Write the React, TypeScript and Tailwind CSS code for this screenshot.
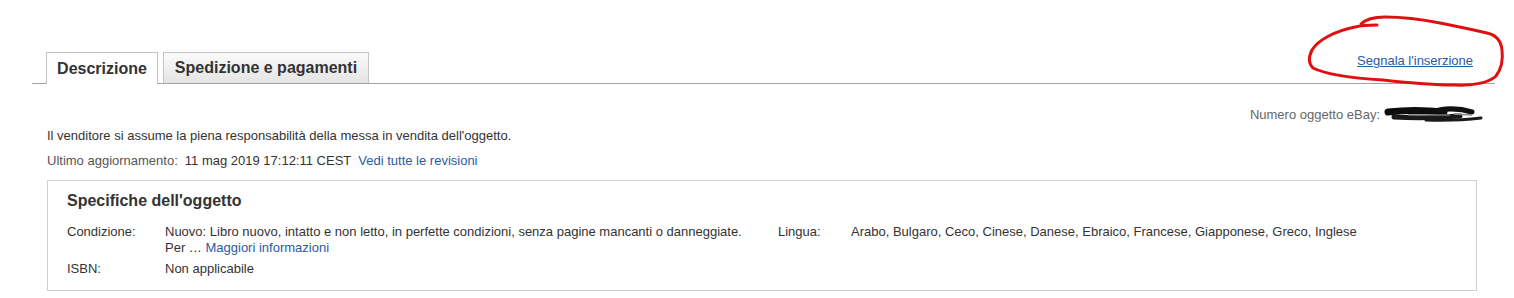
export default function App() {
  return (
    <div className="relative w-[1514px] h-[298px] bg-white font-['Liberation_Sans',Arial,sans-serif] text-[13px] text-[#333] overflow-hidden">
      <div className="ml-[32px] w-[1463px] pt-[52px]">
        {/* Tabs */}
        <div className="flex items-start border-b border-[#a3a3a3] h-[32px]">
          <div className="ml-[14px] h-[32px] w-[112px] border border-b-0 border-[#c4c4c4] bg-white flex items-center justify-center text-[16px] font-bold text-[#333] relative z-10">
            Descrizione
          </div>
          <div className="ml-[5px] h-[31px] w-[206px] border border-b-0 border-[#c4c4c4] bg-gradient-to-b from-[#fbfbfb] to-[#e4e4e4] flex items-center justify-center text-[16px] font-bold text-[#333]">
            Spedizione e pagamenti
          </div>
          <a href="#" className="ml-auto mr-[22px] mt-[1px] text-[13px] leading-[16px] text-[#2a5aa6] underline">
            Segnala l'inserzione
          </a>
        </div>

        {/* Item number */}
        <div className="flex justify-end items-center mt-[23px] pr-[11px] h-[16px] leading-[16px]">
          <span className="text-[#666]">Numero oggetto eBay:</span>
          <svg width="100" height="22" viewBox="0 0 100 22" className="ml-[4px] mt-[2px]">
            <path d="M4,7 Q30,4 60,7" stroke="#0d0d0d" strokeWidth="7" fill="none" strokeLinecap="round" />
            <path d="M10,12 Q40,14 76,11" stroke="#1a1a1a" strokeWidth="5" fill="none" strokeLinecap="round" />
            <path d="M55,5 Q72,2 88,7" stroke="#111" strokeWidth="5" fill="none" strokeLinecap="round" />
            <path d="M42,15 Q72,16 97,13" stroke="#1a1a1a" strokeWidth="3" fill="none" strokeLinecap="round" />
            <path d="M24,10 L66,10" stroke="#777" strokeWidth="1.5" fill="none" />
            <path d="M70,9 L88,10" stroke="#888" strokeWidth="1.5" fill="none" />
          </svg>
        </div>

        {/* Seller note */}
        <div className="ml-[15px] mt-[5px] leading-[16px]">
          Il venditore si assume la piena responsabilità della messa in vendita dell'oggetto.
        </div>
        <div className="ml-[15px] mt-[9px] leading-[16px]">
          <span className="text-[#555]">Ultimo aggiornamento:</span>
          <span className="ml-[7px]">11 mag 2019 17:12:11 CEST</span>
          <a href="#" className="ml-[7px] text-[#2a5aa6]">Vedi tutte le revisioni</a>
        </div>

        {/* Item specifics */}
        <div className="ml-[15px] mt-[11px] w-[1430px] h-[111px] border border-[#cfcfcf] pl-[19px] pt-[10px]">
          <h2 className="text-[16px] leading-[20px] font-bold text-[#333]">Specifiche dell'oggetto</h2>
          <div className="mt-[13px] flex leading-[16px]">
            <div className="w-[98px]">Condizione:</div>
            <div className="w-[613px]">
              Nuovo: Libro nuovo, intatto e non letto, in perfette condizioni, senza pagine mancanti o danneggiate.
              <br />
              Per … <a href="#" className="text-[#2a5aa6]">Maggiori informazioni</a>
            </div>
            <div className="w-[73px]">Lingua:</div>
            <div>Arabo, Bulgaro, Ceco, Cinese, Danese, Ebraico, Francese, Giapponese, Greco, Inglese</div>
          </div>
          <div className="mt-[5px] flex leading-[16px]">
            <div className="w-[98px]">ISBN:</div>
            <div>Non applicabile</div>
          </div>
        </div>
      </div>

      {/* Hand-drawn red annotation */}
      <svg
        className="absolute left-0 top-0 pointer-events-none"
        width="1514"
        height="298"
        viewBox="0 0 1514 298"
      >
        <path
          d="M1377,25 C1370,25 1363,25 1355,27 C1335,31 1318,40 1312,50 C1308,58 1309,64 1313,68 C1325,74 1350,78 1383,80 C1410,83 1430,85 1455,85 C1475,86 1490,82 1496,76 C1502,68 1503,58 1502,50 C1501,40 1496,35 1487,33 C1470,29 1455,26 1440,23 C1420,19 1400,17 1385,17 C1375,17 1366,19 1361,24"
          stroke="#e01010"
          strokeWidth="3"
          fill="none"
          strokeLinecap="round"
          strokeLinejoin="round"
        />
      </svg>
    </div>
  )
}
